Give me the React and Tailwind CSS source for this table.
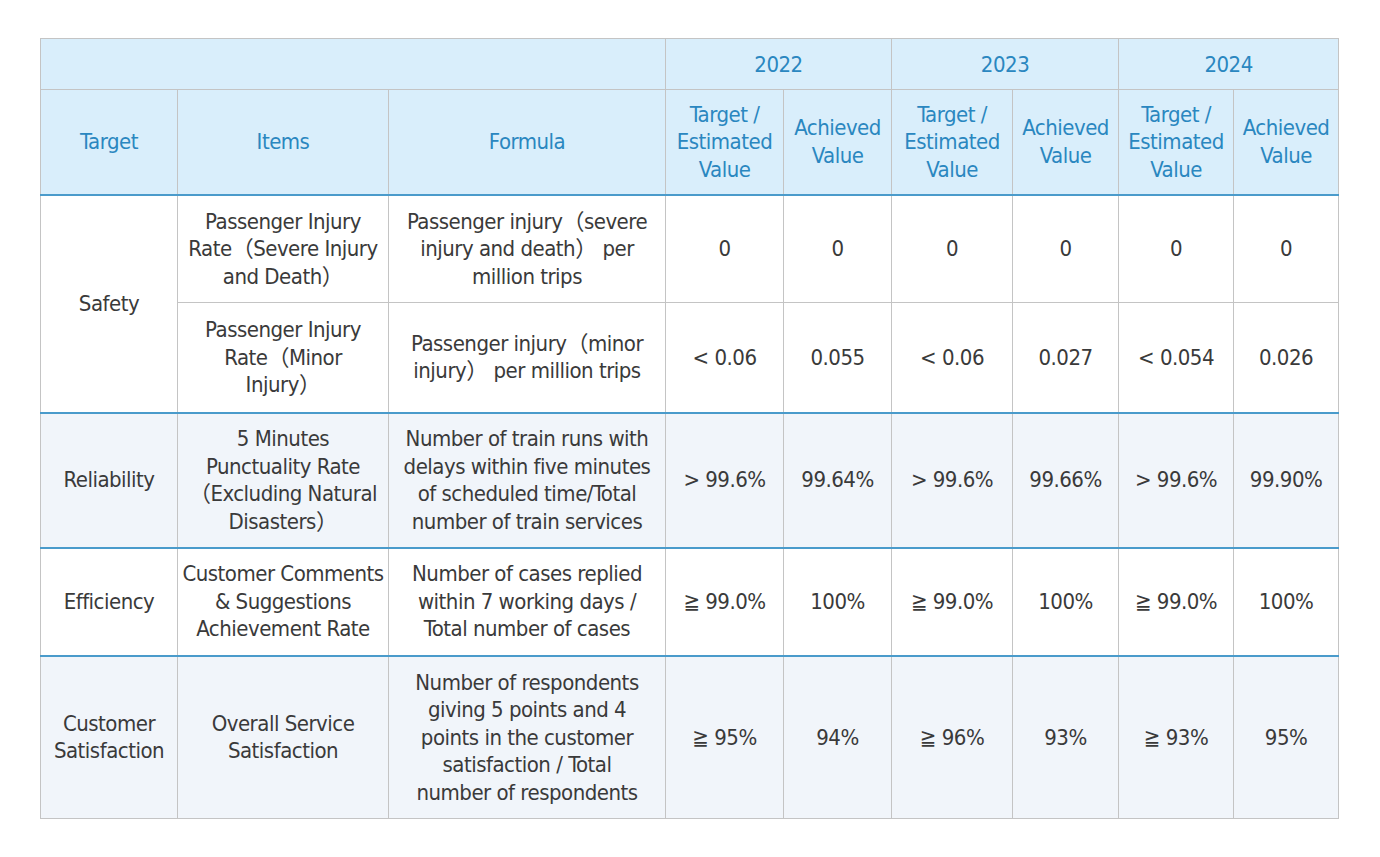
const headBlue = "text-[#2a87c0]"

const rows = [
  {
    group: "Safety",
    bg: "bg-white",
    items: [
      {
        item: ["Passenger Injury", "Rate（Severe Injury", "and Death）"],
        formula: ["Passenger injury（severe", "injury and death） per", "million trips"],
        values: ["0", "0", "0", "0", "0", "0"],
        h: "h-[108px]",
      },
      {
        item: ["Passenger Injury", "Rate（Minor", "Injury）"],
        formula: ["Passenger injury（minor", "injury） per million trips"],
        values: ["< 0.06", "0.055", "< 0.06", "0.027", "< 0.054", "0.026"],
        h: "h-[110px]",
      },
    ],
  },
  {
    group: "Reliability",
    bg: "bg-[#f1f5fa]",
    items: [
      {
        item: ["5 Minutes", "Punctuality Rate", "（Excluding Natural", "Disasters）"],
        formula: [
          "Number of train runs with",
          "delays within five minutes",
          "of scheduled time/Total",
          "number of train services",
        ],
        values: ["> 99.6%", "99.64%", "> 99.6%", "99.66%", "> 99.6%", "99.90%"],
        h: "h-[135px]",
      },
    ],
  },
  {
    group: "Efficiency",
    bg: "bg-white",
    items: [
      {
        item: ["Customer Comments", "& Suggestions", "Achievement Rate"],
        formula: ["Number of cases replied", "within 7 working days /", "Total number of cases"],
        values: ["≧ 99.0%", "100%", "≧ 99.0%", "100%", "≧ 99.0%", "100%"],
        h: "h-[108px]",
      },
    ],
  },
  {
    group: ["Customer", "Satisfaction"],
    bg: "bg-[#f1f5fa]",
    items: [
      {
        item: ["Overall Service", "Satisfaction"],
        formula: [
          "Number of respondents",
          "giving 5 points and 4",
          "points in the customer",
          "satisfaction / Total",
          "number of respondents",
        ],
        values: ["≧ 95%", "94%", "≧ 96%", "93%", "≧ 93%", "95%"],
        h: "h-[163px]",
      },
    ],
  },
]

const Lines = ({ lines }) =>
  (Array.isArray(lines) ? lines : [lines]).map((l, i) => (
    <div key={i} className="whitespace-nowrap">
      {l}
    </div>
  ))

const cell = "border border-[#c4c4c4] text-center align-middle px-0"

export default function App() {
  return (
    <div
      className="w-[1380px] h-[857px] bg-white pt-[38px] pl-[40px]"
      style={{ fontFamily: '"DejaVu Sans Condensed", "Noto Sans CJK SC", sans-serif' }}
    >
      <table className="table-fixed border-collapse w-[1299px] text-[22px] leading-[27.5px] text-[#3a3a3a] tracking-[-0.5px]">
        <colgroup>
          <col className="w-[137px]" />
          <col className="w-[211px]" />
          <col className="w-[277px]" />
          <col className="w-[118px]" />
          <col className="w-[108px]" />
          <col className="w-[121px]" />
          <col className="w-[106px]" />
          <col className="w-[115px]" />
          <col className="w-[105px]" />
        </colgroup>
        <thead className={`bg-[#d9eefb] ${headBlue}`}>
          <tr className="h-[51px]">
            <th colSpan={3} className={cell}></th>
            <th colSpan={2} className={`${cell} font-normal pt-0.5`}>2022</th>
            <th colSpan={2} className={`${cell} font-normal pt-0.5`}>2023</th>
            <th colSpan={2} className={`${cell} font-normal pt-0.5`}>2024</th>
          </tr>
          <tr className="h-[105px] border-b-2 border-b-[#4a9bcb]">
            <th className={`${cell} font-normal`}>Target</th>
            <th className={`${cell} font-normal`}>Items</th>
            <th className={`${cell} font-normal`}>Formula</th>
            {[0, 1, 2].map((i) => [
              <th key={`t${i}`} className={`${cell} font-normal`}>
                <Lines lines={["Target /", "Estimated", "Value"]} />
              </th>,
              <th key={`a${i}`} className={`${cell} font-normal`}>
                <Lines lines={["Achieved", "Value"]} />
              </th>,
            ])}
          </tr>
        </thead>
        <tbody>
          {rows.map((g) =>
            g.items.map((r, i) => (
              <tr
                key={`${g.group}-${i}`}
                className={`${g.bg} ${r.h} ${
                  i === g.items.length - 1 ? "border-b-2 border-b-[#4a9bcb] last:border-b last:border-b-[#c4c4c4]" : ""
                }`}
              >
                {i === 0 && (
                  <td rowSpan={g.items.length} className={cell}>
                    <Lines lines={g.group} />
                  </td>
                )}
                <td className={cell}>
                  <Lines lines={r.item} />
                </td>
                <td className={cell}>
                  <Lines lines={r.formula} />
                </td>
                {r.values.map((v, j) => (
                  <td key={j} className={cell}>
                    {v}
                  </td>
                ))}
              </tr>
            ))
          )}
        </tbody>
      </table>
    </div>
  )
}
